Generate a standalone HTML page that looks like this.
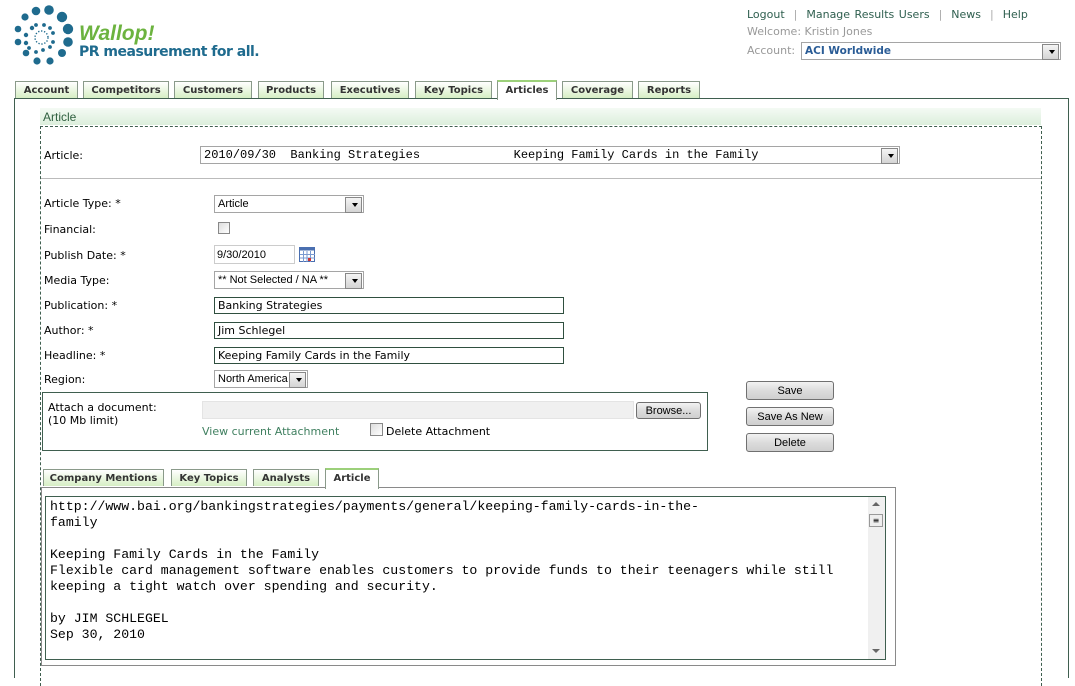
<!DOCTYPE html>
<html><head><meta charset="utf-8"><style>
*{box-sizing:border-box}
body{margin:0;width:1075px;height:673px;background:#fff;font-family:"DejaVu Sans","Liberation Sans",sans-serif;font-size:11px;color:#000;position:relative;overflow:hidden}
.a{position:absolute}
.tab{position:absolute;top:81px;height:17px;border:1px solid #8a9a8a;border-bottom:none;background:linear-gradient(#fff,#d6efc4);font-weight:bold;font-size:10px;color:#333;text-align:center;line-height:16px;padding-top:1px}
.tab.on{background:#fff;top:80px;height:19px;border-top:2px solid #9cd07a}
.lbl{position:absolute;left:44px;font-size:11px;margin-top:1px}
.sel{position:absolute;height:18px;border:1px solid #a5a5a5;background:#fff;font-family:"Liberation Sans",sans-serif;font-size:11px;padding:2px 3px;line-height:12px}
.sel:after{content:"";position:absolute;right:1px;top:1px;width:15px;height:14px;background:linear-gradient(#f4f4f4,#d4d4d4);border:1px solid #888}
.arr{position:absolute;right:5px;top:7px;border:3px solid transparent;border-top:4px solid #000;z-index:2}
.inp{position:absolute;left:214px;width:350px;height:17px;border:1px solid #2f4f3f;font-size:11px;padding:1px 3px;line-height:14px}
.btn{position:absolute;left:746px;width:88px;height:19px;border:1px solid #707070;border-radius:3px;background:linear-gradient(#f2f2f2,#dcdcdc 50%,#cfcfcf);font-family:"Liberation Sans",sans-serif;font-size:11px;text-align:center;line-height:18px}
.mono{font-family:"Liberation Mono",monospace;font-size:13.2px}
</style></head><body>
<svg class="a" style="left:0;top:0" width="90" height="70">
<g fill="#1f6b8e">
<circle cx="25" cy="17" r="3.6"/><circle cx="36" cy="11" r="4.3"/><circle cx="49" cy="10" r="4.8"/><circle cx="62" cy="17" r="5.2"/><circle cx="68" cy="29" r="5.2"/><circle cx="68" cy="42" r="4.8"/><circle cx="62" cy="53" r="4"/><circle cx="50" cy="61" r="3.6"/><circle cx="37" cy="61" r="3.6"/><circle cx="26" cy="53" r="3.3"/><circle cx="18" cy="42" r="3.3"/><circle cx="18" cy="29" r="3.3"/>
<circle cx="32" cy="28" r="2.2"/><circle cx="36" cy="25" r="1.9"/><circle cx="44" cy="25" r="1.9"/><circle cx="50" cy="28" r="1.9"/><circle cx="53" cy="33" r="1.9"/><circle cx="53" cy="42" r="1.9"/><circle cx="50" cy="47" r="1.9"/><circle cx="43" cy="50" r="1.9"/><circle cx="36" cy="52" r="1.9"/><circle cx="29" cy="48" r="1.9"/><circle cx="26" cy="43" r="2.2"/><circle cx="26" cy="35" r="2.2"/>
</g>
<circle cx="41.5" cy="37.5" r="6.5" fill="none" stroke="#1f6b8e" stroke-width="1.4" stroke-dasharray="1.3 1.7"/>
</svg>
<div class="a" style="left:79px;top:22px;font:italic bold 21px 'Liberation Sans',sans-serif;color:#6cb33f">Wallop!</div>
<div class="a" style="left:79px;top:44px;font:bold 14px 'DejaVu Sans',sans-serif;color:#1f6b8e;letter-spacing:-0.5px">PR measurement for all.</div>

<div class="a" style="left:747px;top:8px;font-size:11px;color:#2f5f4f;word-spacing:1px">Logout &nbsp;<span style="color:#aaa">|</span>&nbsp; Manage Results Users &nbsp;<span style="color:#aaa">|</span>&nbsp; News &nbsp;<span style="color:#aaa">|</span>&nbsp; Help</div>
<div class="a" style="left:747px;top:25px;font-size:11px;color:#999">Welcome: Kristin Jones</div>
<div class="a" style="left:747px;top:44px;font-size:11px;color:#999">Account:</div>
<div class="sel" style="left:801px;top:42px;width:260px;color:#2a5c96;font-weight:bold;font-family:'DejaVu Sans',sans-serif;font-size:10.5px"><span class="arr"></span>ACI Worldwide</div>

<div class="tab" style="left:15px;width:63px">Account</div>
<div class="tab" style="left:83px;width:86px">Competitors</div>
<div class="tab" style="left:174px;width:78px">Customers</div>
<div class="tab" style="left:258px;width:66px">Products</div>
<div class="tab" style="left:331px;width:78px">Executives</div>
<div class="tab" style="left:415px;width:77px">Key Topics</div>
<div class="tab on" style="left:497px;width:60px">Articles</div>
<div class="tab" style="left:562px;width:71px">Coverage</div>
<div class="tab" style="left:638px;width:62px">Reports</div>
<div class="a" style="left:14px;top:98px;width:1055px;height:580px;border:1px solid #3f5f4f;border-bottom:none"></div>
<div class="a" style="left:497px;top:97px;width:60px;height:3px;background:#fff;border-left:1px solid #8a9a8a;border-right:1px solid #8a9a8a"></div>

<div class="a" style="left:40px;top:108px;width:1001px;height:17px;background:linear-gradient(#f4faf4,#dcefdc);font-family:'Liberation Sans',sans-serif;font-size:12px;color:#2f5f3f;padding:2px 3px">Article</div>
<div class="a" style="left:40px;top:126px;width:1002px;height:560px;border:1px dashed #3f5f4f;border-bottom:none"></div>

<div class="lbl" style="top:148px">Article:</div>
<div class="sel mono" style="left:200px;top:146px;width:700px;height:18px;font-size:12px;line-height:13px;white-space:pre"><span class="arr"></span>2010/09/30  Banking Strategies             Keeping Family Cards in the Family</div>
<div class="a" style="left:41px;top:178px;width:1000px;height:1px;background:#bbb"></div>

<div class="lbl" style="top:196px">Article Type: *</div>
<div class="sel" style="left:214px;top:195px;width:150px"><span class="arr"></span>Article</div>
<div class="lbl" style="top:222px">Financial:</div>
<div class="a" style="left:218px;top:222px;width:12px;height:12px;border:1px solid #888;background:linear-gradient(135deg,#ddd,#fff)"></div>
<div class="lbl" style="top:248px">Publish Date: *</div>
<div class="a" style="left:214px;top:245px;width:81px;height:19px;border:1px solid #ccc;font-family:'Liberation Sans',sans-serif;font-size:11px;padding:3px 2px">9/30/2010</div>
<svg class="a" style="left:299px;top:247px" width="17" height="16"><rect x="0.5" y="0.5" width="15" height="14" fill="#fff" stroke="#4a6fb0"/><rect x="0.5" y="0.5" width="15" height="3" fill="#4a6fb0"/><g stroke="#7a9ad0"><path d="M4.5 4v11M8 4v11M11.5 4v11M1 7.5h15M1 11h15"/></g><rect x="9" y="11" width="3" height="3" fill="#c33"/></svg>
<div class="lbl" style="top:273px">Media Type:</div>
<div class="sel" style="left:214px;top:271px;width:150px"><span class="arr"></span>** Not Selected / NA **</div>
<div class="lbl" style="top:298px">Publication: *</div>
<div class="inp" style="top:297px">Banking Strategies</div>
<div class="lbl" style="top:323px">Author: *</div>
<div class="inp" style="top:322px">Jim Schlegel</div>
<div class="lbl" style="top:348px">Headline: *</div>
<div class="inp" style="top:347px">Keeping Family Cards in the Family</div>
<div class="lbl" style="top:372px">Region:</div>
<div class="sel" style="left:214px;top:370px;width:94px"><span class="arr"></span>North America</div>

<div class="a" style="left:42px;top:392px;width:666px;height:59px;border:1px solid #3f5f4f"></div>
<div class="a" style="left:48px;top:401px;font-size:11px;line-height:13px">Attach a document:<br>(10 Mb limit)</div>
<div class="a" style="left:202px;top:401px;width:432px;height:18px;background:#f0f0f0;border:1px solid #e4e4e4"></div>
<div class="btn" style="left:636px;top:402px;width:65px;height:17px;line-height:16px">Browse...</div>
<div class="a" style="left:202px;top:425px;font-size:11px;color:#3f7f5f">View current Attachment</div>
<div class="a" style="left:370px;top:423px;width:13px;height:13px;border:1px solid #888;background:linear-gradient(135deg,#ddd,#fff)"></div>
<div class="a" style="left:386px;top:425px;font-size:11px">Delete Attachment</div>

<div class="btn" style="top:381px">Save</div>
<div class="btn" style="top:407px">Save As New</div>
<div class="btn" style="top:433px">Delete</div>

<div class="tab" style="left:43px;top:469px;width:121px">Company Mentions</div>
<div class="tab" style="left:171px;top:469px;width:76px">Key Topics</div>
<div class="tab" style="left:253px;top:469px;width:66px">Analysts</div>
<div class="tab on" style="left:325px;top:468px;width:54px;height:20px">Article</div>
<div class="a" style="left:41px;top:487px;width:855px;height:179px;border:1px solid #8a8a8a"></div>
<div class="a" style="left:325px;top:486px;width:54px;height:3px;background:#fff;border-left:1px solid #8a9a8a;border-right:1px solid #8a9a8a"></div>
<div class="a mono" style="left:45px;top:496px;width:841px;height:164px;border:1px solid #3f5f4f;padding:2px 4px;line-height:16px;white-space:pre">http://www.bai.org/bankingstrategies/payments/general/keeping-family-cards-in-the-
family

Keeping Family Cards in the Family
Flexible card management software enables customers to provide funds to their teenagers while still
keeping a tight watch over spending and security.

by JIM SCHLEGEL
Sep 30, 2010</div>
<div class="a" style="left:868px;top:497px;width:17px;height:162px;background:#f0f0f0"></div>
<div class="a" style="left:872px;top:502px;border:4px solid transparent;border-bottom:4px solid #666;border-top:none"></div>
<div class="a" style="left:869px;top:514px;width:14px;height:13px;border:1px solid #999;background:#eee;font-size:8px;text-align:center;line-height:11px">≡</div>
<div class="a" style="left:872px;top:649px;border:4px solid transparent;border-top:4px solid #666;border-bottom:none"></div>
</body></html>
